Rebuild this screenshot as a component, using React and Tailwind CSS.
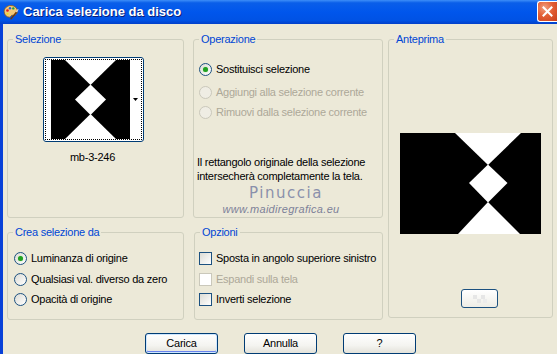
import React from "react";

function Radio({ checked, disabled, label }) {
  return (
    <div className="flex items-center h-[13px]">
      <span
        className={`w-[13px] h-[13px] shrink-0 rounded-full border flex items-center justify-center ${
          disabled
            ? "border-[#cac8bb] bg-[#efede4]"
            : "border-[#1c5180] bg-[linear-gradient(135deg,#dcdcd5,#ffffff)]"
        }`}
      >
        {checked && <span className="w-[5px] h-[5px] rounded-full bg-[#21a121] shadow-[0_0_1px_#7ad07a]" />}
      </span>
      <span className={`ml-[4px] whitespace-nowrap ${disabled ? "text-[#aca899]" : "text-black"}`}>{label}</span>
    </div>
  );
}

function Check({ disabled, label }) {
  return (
    <div className="flex items-center h-[13px]">
      <span
        className={`w-[13px] h-[13px] shrink-0 border ${
          disabled ? "border-[#cac8bb] bg-white" : "border-[#1c5180] bg-[linear-gradient(135deg,#dcdcd5,#ffffff)]"
        }`}
      />
      <span className={`ml-[4px] whitespace-nowrap ${disabled ? "text-[#aca899]" : "text-black"}`}>{label}</span>
    </div>
  );
}

function Group({ title, className, children }) {
  return (
    <fieldset className={`border border-[#d0d0bf] rounded-[3px] ${className}`}>
      <legend className="ml-[5px] px-[2px] text-[#0046d5] leading-[13px]">{title}</legend>
      {children}
    </fieldset>
  );
}

function Btn({ children, def }) {
  return (
    <button
      className={`w-[73px] h-[21px] rounded-[3px] border border-[#003c74] bg-[linear-gradient(180deg,#ffffff_0%,#f4f4f0_60%,#e3e2da_100%)] text-black leading-[13px] ${
        def ? "shadow-[inset_0_0_0_1px_#cee7ff,inset_0_-1px_0_1px_#6982ee]" : ""
      }`}
    >
      {children}
    </button>
  );
}

export default function App() {
  return (
    <div className="w-[557px] h-[354px] overflow-hidden flex flex-col bg-[#ece9d8] font-['Liberation_Sans',Arial,sans-serif] text-[11px]">
      {/* Title bar */}
      <div className="h-[24px] shrink-0 flex items-center justify-between bg-[linear-gradient(180deg,#3d8ef8_0%,#0a5ee9_12%,#0056ec_50%,#0052e4_85%,#0240c9_100%)]">
        <div className="flex items-center">
          <svg width="16" height="16" viewBox="0 0 16 16" className="ml-[3px]">
            <path d="M8 1.5C4 1.5 1.2 4.2 1.2 7.6c0 3.4 2.6 5.6 5.2 5.6 1.4 0 1.2-1.4 2.2-1.8 1-.4 2.4.5 3.6-.4C13.8 9.8 14.8 8 14.2 5.8 13.4 3.2 11 1.5 8 1.5z" fill="#f2c878" stroke="#8a5a1a" strokeWidth="0.8" />
            <circle cx="4.5" cy="6.5" r="1.3" fill="#e02020" />
            <circle cx="7" cy="4.2" r="1.2" fill="#2060e0" />
            <circle cx="10.3" cy="4.4" r="1.2" fill="#20a040" />
            <circle cx="4.6" cy="9.8" r="1.1" fill="#f0e020" />
            <path d="M7 15 L13 7.5 L14.3 8.5 L8.3 15.6 Z" fill="#6a3a10" />
            <path d="M12.8 7.6 L15 4.8 L15.6 5.4 L14 8.4 Z" fill="#d0d0d0" />
          </svg>
          <span className="ml-[4px] text-white font-bold text-[13px] leading-[16px] [text-shadow:1px_1px_0_#0a1e78] font-['Liberation_Sans',Arial,sans-serif]">
            Carica selezione da disco
          </span>
        </div>
        <div className="w-[20px] h-[21px] mb-[2px] rounded-l-[3px] border border-r-0 border-white bg-[radial-gradient(circle_at_35%_30%,#f0a080_0%,#e35f35_45%,#c9401c_100%)] flex items-center justify-center">
          <svg width="11" height="11" viewBox="0 0 11 11">
            <path d="M1.5 1.5 L9.5 9.5 M9.5 1.5 L1.5 9.5" stroke="white" strokeWidth="2" strokeLinecap="square" />
          </svg>
        </div>
      </div>

      {/* Body */}
      <div className="flex-1 flex flex-col border-l-[3px] border-[#0841d8] pl-[4px] pt-[9px] tracking-[-0.25px]">
        <div className="flex">
          {/* Column 1 */}
          <div className="w-[177px] flex flex-col">
            <Group title="Selezione" className="h-[185px]">
              <div className="mt-[11px] ml-[35px] w-[101px] h-[85px] rounded-[3px] border border-[#003c74] bg-white p-[1px]">
                <div className="w-full h-full border border-dotted border-black flex items-center pl-[5px] pr-[2px]">
                  <svg width="79" height="79" viewBox="0 0 79 79" className="shrink-0">
                    <rect width="79" height="79" fill="#000" />
                    <polygon points="14,0 65,0 39.5,25" fill="#fff" />
                    <polygon points="24,39.5 39.5,24.5 55,39.5 39.5,55" fill="#fff" />
                    <polygon points="39.5,54 14,79 65,79" fill="#fff" />
                  </svg>
                  <div className="flex-1 flex justify-end pr-[1px]">
                    <svg width="5" height="3" viewBox="0 0 5 3">
                      <polygon points="0,0 5,0 2.5,3" fill="#000" />
                    </svg>
                  </div>
                </div>
              </div>
              <div className="mt-[9px] text-center pr-[6px] leading-[13px] text-black">mb-3-246</div>
            </Group>
            <Group title="Crea selezione da" className="h-[94px] mt-[8px]">
              <div className="pl-[6px] mt-[13px] flex flex-col">
                <Radio checked label="Luminanza di origine" />
                <div className="mt-[8px]">
                  <Radio label="Qualsiasi val. diverso da zero" />
                </div>
                <div className="mt-[7px]">
                  <Radio label="Opacità di origine" />
                </div>
              </div>
            </Group>
          </div>

          {/* Column 2 */}
          <div className="w-[190px] ml-[9px] flex flex-col">
            <Group title="Operazione" className="h-[185px]">
              <div className="pl-[5px] mt-[17px] flex flex-col">
                <Radio checked label="Sostituisci selezione" />
                <div className="mt-[10px]">
                  <Radio disabled label="Aggiungi alla selezione corrente" />
                </div>
                <div className="mt-[7px]">
                  <Radio disabled label="Rimuovi dalla selezione corrente" />
                </div>
              </div>
              <div className="mt-[36px] pl-[3px] leading-[14px] text-black">
                Il rettangolo originale della selezione
                <br />
                intersecherà completamente la tela.
              </div>
              <div className="text-center mt-[1px] leading-[18px] text-[15px] tracking-[1.5px] text-[#8a90ab] font-['DejaVu_Sans',sans-serif] pr-[4px]">
                Pinuccia
              </div>
              <div className="text-center leading-[14px] text-[11px] tracking-[0.3px] text-[#7d8198] italic font-['Liberation_Sans',Arial,sans-serif] pr-[14px]">
                www.maidiregrafica.eu
              </div>
            </Group>
            <Group title="Opzioni" className="h-[94px] mt-[8px] ml-[1px]">
              <div className="pl-[4px] mt-[13px] flex flex-col">
                <Check label="Sposta in angolo superiore sinistro" />
                <div className="mt-[8px]">
                  <Check disabled label="Espandi sulla tela" />
                </div>
                <div className="mt-[7px]">
                  <Check label="Inverti selezione" />
                </div>
              </div>
            </Group>
          </div>

          {/* Column 3 */}
          <div className="w-[165px] ml-[5px]">
            <Group title="Anteprima" className="h-[285px]">
              <div className="mt-[87px] flex justify-center">
                <svg width="141" height="101" viewBox="0 0 141 101">
                  <rect width="141" height="101" fill="#000" />
                  <polygon points="55,0 121,0 88,32" fill="#fff" />
                  <polygon points="69,50 88,31.5 107.5,50 88,69.5" fill="#fff" />
                  <polygon points="88,69 58,101 120,101" fill="#fff" />
                </svg>
              </div>
              <div className="mt-[55px] ml-[72px] w-[37px] h-[19px] rounded-[3px] border border-[#1c5180] bg-[linear-gradient(180deg,#ffffff,#eeede6)] flex items-center justify-center">
                <svg width="14" height="8" viewBox="0 0 14 8">
                  <rect x="0" y="0" width="4" height="4" fill="#e6e6e6" />
                  <rect x="8" y="0" width="4" height="4" fill="#e6e6e6" />
                  <rect x="4" y="4" width="4" height="4" fill="#e6e6e6" />
                  <rect x="10" y="4" width="4" height="4" fill="#ececec" />
                </svg>
              </div>
            </Group>
          </div>
        </div>

        {/* Buttons */}
        <div className="mt-[13px] ml-[138px] flex gap-[26px]">
          <Btn def>Carica</Btn>
          <Btn>Annulla</Btn>
          <Btn>?</Btn>
        </div>
      </div>
    </div>
  );
}
